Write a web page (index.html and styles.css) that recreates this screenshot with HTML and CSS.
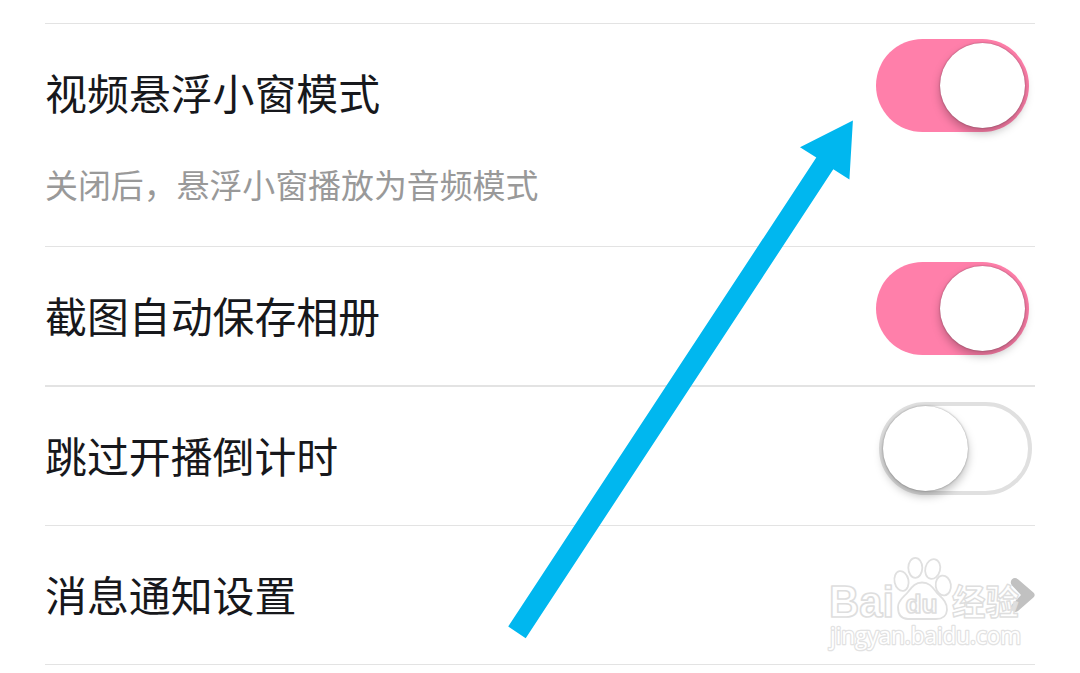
FILE: index.html
```html
<!DOCTYPE html>
<html lang="zh-CN">
<head>
<meta charset="utf-8">
<title>设置</title>
<link rel="stylesheet" href="styles.css">
</head>
<body>
<main class="settings">
  <section class="row row-tall">
    <div class="copy">
      <h2 class="title">视频悬浮小窗模式</h2>
      <p class="note">关闭后，悬浮小窗播放为音频模式</p>
    </div>
    <div class="switch switch-on"><span class="knob"></span></div>
  </section>
  <section class="row">
    <h2 class="title">截图自动保存相册</h2>
    <div class="switch switch-on"><span class="knob"></span></div>
  </section>
  <section class="row row-strong">
    <h2 class="title">跳过开播倒计时</h2>
    <div class="switch switch-off"><span class="knob"></span></div>
  </section>
  <section class="row row-last">
    <h2 class="title">消息通知设置</h2>
    <svg class="chevron" width="25" height="36" viewBox="0 0 25 36"><path d="M1.8 8.2Q-.4 5 2 2.3Q4.8-.4 8 2.3L23.4 15.5Q26 18 23.4 20.5L8 34Q4.5 36.3 2 33.6Q-.2 30.8 1.8 27.8L11 18Z"/></svg>
  </section>
</main>

<svg class="watermark" width="210" height="106" viewBox="820 550 210 106">
  <g class="paw">
    <ellipse cx="901.5" cy="581" rx="7" ry="10" transform="rotate(-12 901.5 581)"/>
    <ellipse cx="915.3" cy="567.8" rx="7" ry="10"/>
    <ellipse cx="932.7" cy="569" rx="7.4" ry="10" transform="rotate(14 932.7 569)"/>
    <ellipse cx="943.3" cy="585.5" rx="7.6" ry="10" transform="rotate(-8 943.3 585.5)"/>
    <path d="M922 582.5C930 582.5 933 588 937 593C942 598 947.5 602 947 610C946.5 616.5 942 619 936 619H908C901 619 898 614 898 607C898 600 904 597 908 592C912 587 915 582.5 922 582.5Z"/>
  </g>
  <g class="mark">
    <text class="brand" x="829" y="617" textLength="65" lengthAdjust="spacingAndGlyphs">Bai</text>
    <text class="du" x="905.5" y="612.5" textLength="32" lengthAdjust="spacingAndGlyphs">du</text>
    <text class="cjk" x="952" y="614.5" textLength="67" lengthAdjust="spacingAndGlyphs">经验</text>
    <text class="url" x="830" y="643.5" textLength="191" lengthAdjust="spacingAndGlyphs">jingyan.baidu.com</text>
  </g>
</svg>

<svg class="arrow" width="1080" height="673" viewBox="0 0 1080 673"><path d="M852.9 120.4L800 147.3L816.3 157.5L508.2 626.4L525.7 638.2L833.3 169.3L849.4 179.6Z"/></svg>
</body>
</html>
```
FILE: styles.css
```css
* {
  box-sizing: border-box;
}

body {
  margin: 0;
  height: 673px;
  overflow: hidden;
  background: #fff;
  font-family: "Noto Sans CJK SC", sans-serif;
}

.settings {
  padding: 23px 45px 0;
}

.row {
  display: flex;
  justify-content: space-between;
  align-items: flex-start;
  height: 139px;
  padding: 15px 0 0;
  border-top: 1px solid #e3e3e3;
}

.row-tall {
  height: 223px;
}

.row-strong {
  height: 140px;
  border-top-width: 2px;
}

.row-last {
  height: 140px;
  border-bottom: 1px solid #e3e3e3;
}

.title,
.note {
  margin: 0;
  font-weight: 400;
  white-space: nowrap;
}

.title {
  padding-top: 22px;
  font-size: 41.9px;
  line-height: 62px;
  color: #17181c;
}

.note {
  padding-top: 36px;
  font-size: 32.9px;
  line-height: 50px;
  color: #999;
}

.switch {
  display: flex;
  width: 153px;
  height: 93px;
  border-radius: 47px;
}

.switch-on {
  justify-content: flex-end;
  margin-right: 6px;
  padding: 4px 4px 0 0;
  background: #ff7faa;
}

.switch-off {
  margin-right: 3px;
  border: 4px solid #e0e0e0;
}

.knob {
  width: 85px;
  height: 85px;
  border-radius: 50%;
  background: #fff;
  box-shadow: 0 0 2px rgba(0, 0, 0, .38), 0 5px 10px rgba(0, 0, 0, .26);
}

.chevron {
  margin-top: 36px;
  fill: #c1c1c1;
}

.watermark {
  position: absolute;
  left: 820px;
  top: 550px;
  overflow: visible;
}

.paw {
  fill: #fff;
  stroke: #e0e0e0;
  stroke-width: 1.8;
}

.mark {
  fill: rgba(255, 255, 255, .5);
  stroke: #dedede;
  stroke-width: 1.7;
  stroke-linejoin: round;
}

.brand {
  font: bold 44px "Liberation Sans", sans-serif;
}

.du {
  font: bold 26px "Liberation Sans", sans-serif;
}

.cjk {
  font: bold 35px "Noto Sans CJK SC", sans-serif;
  stroke-width: 1.4;
}

.url {
  font: 24px "Open Sans", sans-serif;
  fill: #fff;
  stroke: #e2e2e2;
  stroke-width: 2.6;
  paint-order: stroke;
}

.arrow {
  position: absolute;
  left: 0;
  top: 0;
  fill: #00b7ef;
}
```
